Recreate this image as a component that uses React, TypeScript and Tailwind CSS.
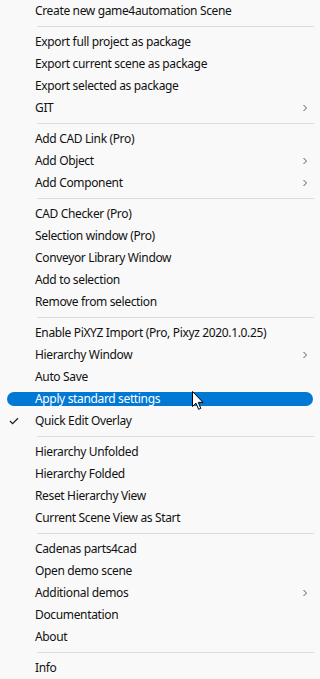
import React from 'react'

type Item = { label: string; sub?: boolean; checked?: boolean; active?: boolean }

const sections: Item[][] = [
  [{ label: 'Create new game4automation Scene' }],
  [
    { label: 'Export full project as package' },
    { label: 'Export current scene as package' },
    { label: 'Export selected as package' },
    { label: 'GIT', sub: true },
  ],
  [
    { label: 'Add CAD Link (Pro)' },
    { label: 'Add Object', sub: true },
    { label: 'Add Component', sub: true },
  ],
  [
    { label: 'CAD Checker (Pro)' },
    { label: 'Selection window (Pro)' },
    { label: 'Conveyor Library Window' },
    { label: 'Add to selection' },
    { label: 'Remove from selection' },
  ],
  [
    { label: 'Enable PiXYZ Import (Pro, Pixyz 2020.1.0.25)' },
    { label: 'Hierarchy Window', sub: true },
    { label: 'Auto Save' },
    { label: 'Apply standard settings', active: true },
    { label: 'Quick Edit Overlay', checked: true },
  ],
  [
    { label: 'Hierarchy Unfolded' },
    { label: 'Hierarchy Folded' },
    { label: 'Reset Hierarchy View' },
    { label: 'Current Scene View as Start' },
  ],
  [
    { label: 'Cadenas parts4cad' },
    { label: 'Open demo scene' },
    { label: 'Additional demos', sub: true },
    { label: 'Documentation' },
    { label: 'About' },
  ],
  [{ label: 'Info' }],
]

function Chevron() {
  return (
    <svg width="6" height="8" viewBox="0 0 6 8">
      <path d="M1.5 1 L4.5 4 L1.5 7" fill="none" stroke="#5a5a5a" strokeWidth="1" />
    </svg>
  )
}

function Check() {
  return (
    <svg width="10" height="8" viewBox="0 0 10 8">
      <path d="M1 4 L3.6 6.6 L9 1.2" fill="none" stroke="#222" strokeWidth="1.3" />
    </svg>
  )
}

// mouse pointer hovering the highlighted entry
function Cursor() {
  return (
    <svg width="13" height="20" viewBox="0 0 13 20" className="absolute left-[192px] top-[3px]">
      <path
        d="M0.5 0.5 L0.5 15.5 L4 12.2 L6.6 18.3 L8.8 17.4 L6.3 11.4 L11 11.4 Z"
        fill="#fff"
        stroke="#000"
        strokeWidth="1"
        strokeLinejoin="round"
      />
    </svg>
  )
}

function Row({ item }: { item: Item }) {
  return (
    <div className="relative h-[22px] flex items-center px-[7px]">
      <div className={`flex-1 h-[14px] flex items-center rounded-full ${item.active ? 'bg-[#0078d4] text-white' : 'text-[#111]'}`}>
        <div className="w-[28px] pl-[2px] flex items-center">{item.checked && <Check />}</div>
        <span className="flex-1 text-[12px] leading-none tracking-[-0.35px]">{item.label}</span>
        <div className="w-[6px] mr-[5px] flex items-center">{item.sub && <Chevron />}</div>
      </div>
      {item.active && <Cursor />}
    </div>
  )
}

export default function App() {
  return (
    <div
      className="w-[320px] h-[679px] bg-[#f9f9f9] overflow-hidden"
      style={{ fontFamily: '"Noto Sans", "Open Sans", sans-serif' }}
    >
      {sections.map((sec, i) => (
        <div key={i}>
          {i > 0 && (
            <div className="h-[9px] flex items-center pl-[37px] pr-[6px]">
              <div className="h-px w-full bg-[#dcdcdc]" />
            </div>
          )}
          {sec.map((it) => <Row key={it.label} item={it} />)}
        </div>
      ))}
    </div>
  )
}
